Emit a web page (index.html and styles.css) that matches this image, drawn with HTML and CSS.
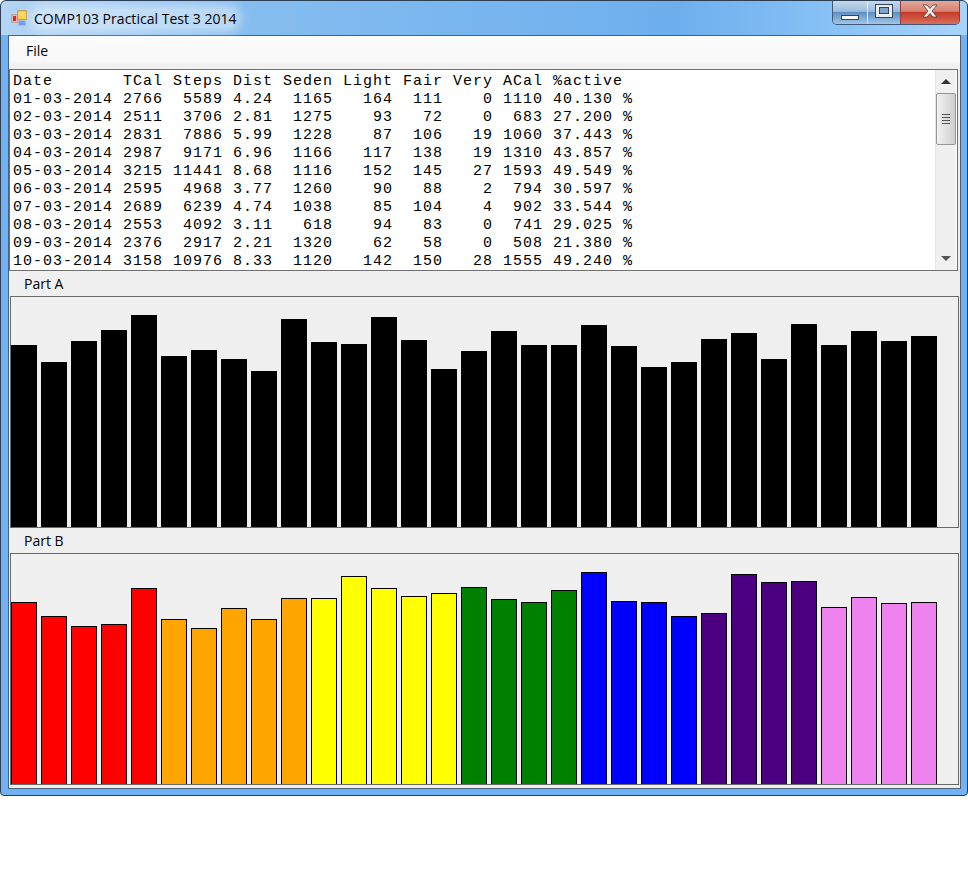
FILE: index.html
```html
<!DOCTYPE html>
<html lang="en">

<head>
    <meta charset="UTF-8">
    <title>COMP103 Practical Test 3 2014</title>
    <link rel="stylesheet" href="styles.css">
</head>

<body>
    <div class="window">
        <div class="titlebar">
            <svg class="app-icon" width="18" height="18" viewBox="0 0 18 18">
                <rect x="1.5" y="5.5" width="6" height="8" fill="#e8b0a8" stroke="#b9a9a0" />
                <rect x="3" y="7" width="3" height="5" fill="#d42a20" />
                <rect x="7.5" y="1.5" width="9" height="9" fill="#f6c93c" stroke="#b8a468" />
                <rect x="9" y="3" width="6" height="6" fill="#ffd75a" />
                <rect x="8.5" y="11.5" width="7" height="5" fill="#6f9ce8" stroke="#a9b9d8" />
            </svg>
            <span class="title">COMP103 Practical Test 3 2014</span>
            <div class="caption">
                <div class="cap-btn cap-min">
                    <svg width="18" height="5" viewBox="0 0 18 5">
                        <rect x="0.5" y="0.5" width="17" height="4" fill="#f4f6f8" stroke="#33475c" />
                    </svg>
                </div>
                <div class="cap-btn cap-max">
                    <svg width="18" height="14" viewBox="0 0 18 14">
                        <rect x="0.5" y="0.5" width="17" height="13" fill="#e9edf1" stroke="#33475c" />
                        <rect x="4.5" y="3.5" width="9" height="6" fill="#7da3cc" stroke="#33475c" />
                    </svg>
                </div>
                <div class="cap-btn cap-close">
                    <svg width="16" height="14" viewBox="0 0 16 14">
                        <path d="M1 1H5L8 4.5L11 1H15L10 7L15 13H11L8 9.5L5 13H1L6 7Z" fill="#f0f0f0" stroke="#5a3a3a" stroke-width="0.8" />
                    </svg>
                </div>
            </div>
        </div>
        <div class="client">
            <div class="menu">File</div>
            <div class="output">
                <pre class="log">Date       TCal Steps Dist Seden Light Fair Very ACal %active
01-03-2014 2766  5589 4.24  1165   164  111    0 1110 40.130 %
02-03-2014 2511  3706 2.81  1275    93   72    0  683 27.200 %
03-03-2014 2831  7886 5.99  1228    87  106   19 1060 37.443 %
04-03-2014 2987  9171 6.96  1166   117  138   19 1310 43.857 %
05-03-2014 3215 11441 8.68  1116   152  145   27 1593 49.549 %
06-03-2014 2595  4968 3.77  1260    90   88    2  794 30.597 %
07-03-2014 2689  6239 4.74  1038    85  104    4  902 33.544 %
08-03-2014 2553  4092 3.11   618    94   83    0  741 29.025 %
09-03-2014 2376  2917 2.21  1320    62   58    0  508 21.380 %
10-03-2014 3158 10976 8.33  1120   142  150   28 1555 49.240 %</pre>
                <div class="scrollbar">
                    <div class="arrow arrow-up"></div>
                    <div class="thumb">
                        <span class="grip"></span>
                        <span class="grip"></span>
                        <span class="grip"></span>
                        <span class="grip"></span>
                    </div>
                    <div class="arrow arrow-down"></div>
                </div>
            </div>
            <div class="label">Part A</div>
            <div class="chart">
                <div class="bar plain" style="height:182px"></div>
                <div class="bar plain" style="height:165px"></div>
                <div class="bar plain" style="height:186px"></div>
                <div class="bar plain" style="height:197px"></div>
                <div class="bar plain" style="height:212px"></div>
                <div class="bar plain" style="height:171px"></div>
                <div class="bar plain" style="height:177px"></div>
                <div class="bar plain" style="height:168px"></div>
                <div class="bar plain" style="height:156px"></div>
                <div class="bar plain" style="height:208px"></div>
                <div class="bar plain" style="height:185px"></div>
                <div class="bar plain" style="height:183px"></div>
                <div class="bar plain" style="height:210px"></div>
                <div class="bar plain" style="height:187px"></div>
                <div class="bar plain" style="height:158px"></div>
                <div class="bar plain" style="height:176px"></div>
                <div class="bar plain" style="height:196px"></div>
                <div class="bar plain" style="height:182px"></div>
                <div class="bar plain" style="height:182px"></div>
                <div class="bar plain" style="height:202px"></div>
                <div class="bar plain" style="height:181px"></div>
                <div class="bar plain" style="height:160px"></div>
                <div class="bar plain" style="height:165px"></div>
                <div class="bar plain" style="height:188px"></div>
                <div class="bar plain" style="height:194px"></div>
                <div class="bar plain" style="height:168px"></div>
                <div class="bar plain" style="height:203px"></div>
                <div class="bar plain" style="height:182px"></div>
                <div class="bar plain" style="height:196px"></div>
                <div class="bar plain" style="height:186px"></div>
                <div class="bar plain" style="height:191px"></div>
            </div>
            <div class="label">Part B</div>
            <div class="chart">
                <div class="bar red" style="height:182px"></div>
                <div class="bar red" style="height:168px"></div>
                <div class="bar red" style="height:158px"></div>
                <div class="bar red" style="height:160px"></div>
                <div class="bar red" style="height:196px"></div>
                <div class="bar orange" style="height:165px"></div>
                <div class="bar orange" style="height:156px"></div>
                <div class="bar orange" style="height:176px"></div>
                <div class="bar orange" style="height:165px"></div>
                <div class="bar orange" style="height:186px"></div>
                <div class="bar yellow" style="height:186px"></div>
                <div class="bar yellow" style="height:208px"></div>
                <div class="bar yellow" style="height:196px"></div>
                <div class="bar yellow" style="height:188px"></div>
                <div class="bar yellow" style="height:191px"></div>
                <div class="bar green" style="height:197px"></div>
                <div class="bar green" style="height:185px"></div>
                <div class="bar green" style="height:182px"></div>
                <div class="bar green" style="height:194px"></div>
                <div class="bar blue" style="height:212px"></div>
                <div class="bar blue" style="height:183px"></div>
                <div class="bar blue" style="height:182px"></div>
                <div class="bar blue" style="height:168px"></div>
                <div class="bar indigo" style="height:171px"></div>
                <div class="bar indigo" style="height:210px"></div>
                <div class="bar indigo" style="height:202px"></div>
                <div class="bar indigo" style="height:203px"></div>
                <div class="bar violet" style="height:177px"></div>
                <div class="bar violet" style="height:187px"></div>
                <div class="bar violet" style="height:181px"></div>
                <div class="bar violet" style="height:182px"></div>
            </div>
        </div>
    </div>
</body>

</html>
```

FILE: styles.css
```css
* {
    margin: 0;
    padding: 0;
    box-sizing: border-box;
}

body {
    background-color: #fff;
    font-family: "Open Sans", "Liberation Sans", sans-serif;
    color: #000;
}

.window {
    width: 968px;
    height: 796px;
    padding: 0 6px 6px 7px;
    border: 1px solid #2c3f55;
    border-radius: 6px 6px 4px 4px;
    background: linear-gradient(90deg, #b4d5f4 0, #86bdf0 25%, #6dafed 70%, #86c0f5 85%, #a8d4fb 100%) top / 100% 34px no-repeat, #70b2f4;
    overflow: hidden;
}

.titlebar {
    height: 34px;
    display: flex;
    align-items: center;
}

.app-icon {
    margin-left: 2px;
    margin-right: 6px;
    flex: none;
}

.title {
    font-size: 14px;
    letter-spacing: 0.03px;
    background-color: rgba(255, 255, 255, 0.4);
    box-shadow: 0 0 10px 5px rgba(255, 255, 255, 0.4);
    border-radius: 10px;
}

.caption {
    margin-left: auto;
    margin-right: 1px;
    margin-top: -11px;
    width: 128px;
    height: 24px;
    display: flex;
    border: 1px solid #3f5873;
    border-top: 0;
    border-radius: 0 0 5px 5px;
    overflow: hidden;
}

.cap-btn {
    display: flex;
    align-items: center;
    justify-content: center;
}

.cap-min {
    width: 35px;
    padding-top: 11px;
    border-right: 1px solid #dfe9f2;
    background: linear-gradient(#c4d9ec, #9bbcdc 45%, #5f8fc2 50%, #a3c6e8);
}

.cap-max {
    width: 33px;
    padding-bottom: 2px;
    border-right: 1px solid #a33;
    background: linear-gradient(#c4d9ec, #9bbcdc 45%, #5f8fc2 50%, #a3c6e8);
}

.cap-close {
    flex: 1;
    padding-bottom: 2px;
    background: linear-gradient(#e3aa9d, #d77f6d 45%, #c63b28 50%, #d9705a);
}

.client {
    height: 754px;
    border: 1px solid #4d6176;
    background-color: #f0f0f0;
}

.menu {
    height: 33px;
    padding-left: 17px;
    font-size: 14px;
    line-height: 29px;
    background: linear-gradient(#fcfcfc, #f7f7f7 27px, #f0f0f0 28px);
}

.output {
    width: 949px;
    height: 202px;
    display: flex;
    border: 1px solid #707070;
    background-color: #fff;
}

.log {
    flex: 1;
    padding: 3px 0 0 3px;
    overflow: hidden;
    font-family: "Liberation Mono", "Courier New", monospace;
    font-size: 15px;
    letter-spacing: 1px;
    line-height: 18px;
}

.scrollbar {
    width: 21px;
    display: flex;
    flex-direction: column;
    margin-right: 1px;
    background-color: #f0f0f0;
    border-left: 1px solid #e6e6e6;
}

.arrow {
    height: 23px;
    flex: none;
    display: flex;
    align-items: center;
    justify-content: center;
}

.arrow::after {
    content: "";
    border-left: 5px solid transparent;
    border-right: 5px solid transparent;
}

.arrow-up::after {
    border-bottom: 5px solid #333;
}

.arrow-down {
    margin-top: auto;
}

.arrow-down::after {
    border-top: 5px solid #555;
}

.thumb {
    height: 52px;
    display: flex;
    flex-direction: column;
    align-items: center;
    justify-content: center;
    gap: 2px;
    border: 1px solid #979797;
    border-radius: 2px;
    background: linear-gradient(90deg, #f1f1f1, #e0e0e0 50%, #cfcfcf);
}

.grip {
    width: 8px;
    height: 1px;
    background-color: #555;
}

.label {
    height: 25px;
    padding-left: 15px;
    font-size: 14px;
    line-height: 26px;
}

.chart {
    width: 949px;
    height: 232px;
    margin-left: 1px;
    display: flex;
    align-items: flex-end;
    gap: 4px;
    border: 1px solid #696969;
}

.bar {
    width: 26px;
    flex: none;
    border: 1px solid #000;
    border-bottom: 0;
}

.plain {
    background-color: #000;
}

.red {
    background-color: #f00;
}

.orange {
    background-color: #ffa500;
}

.yellow {
    background-color: #ff0;
}

.green {
    background-color: #008000;
}

.blue {
    background-color: #00f;
}

.indigo {
    background-color: #4b0082;
}

.violet {
    background-color: #ee82ee;
}
```
